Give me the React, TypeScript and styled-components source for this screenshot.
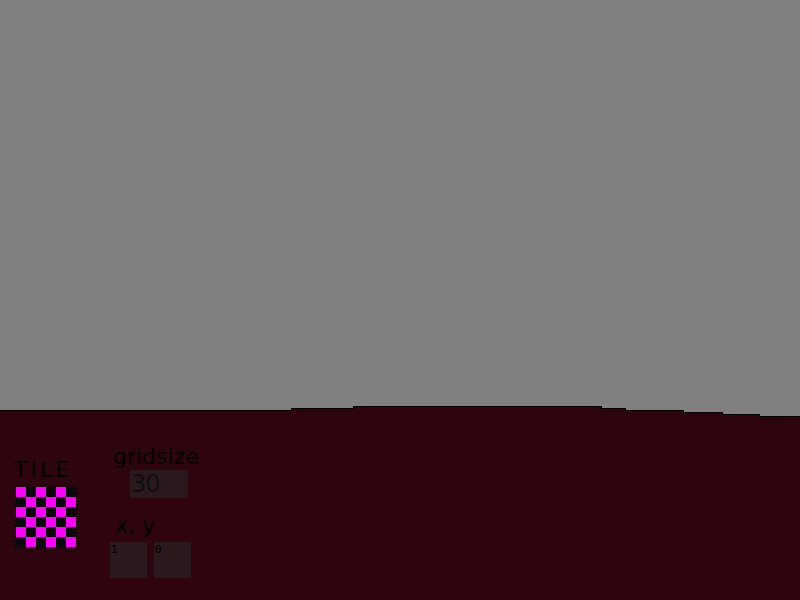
import React from 'react';
import styled, {createGlobalStyle} from 'styled-components';

const GlobalStyle = createGlobalStyle`
  html, body {
    margin: 0;
    padding: 0;
    background: #808080;
  }
  body {
    font-family: "DejaVu Sans", "Liberation Sans", sans-serif;
  }
`;

// terrain outline, left to right
const ridge: [number, number][] = [
  [0, 410], [291, 410], [291, 408], [353, 408], [353, 406], [601, 406],
  [601, 408], [625, 408], [625, 410], [683, 410], [683, 412], [722, 412],
  [722, 414], [759, 414], [759, 416], [800, 416],
];

const tileCells = Array.from({length: 36}, (_, i) => (Math.floor(i / 6) + (i % 6)) % 2 === 0);

const App: React.FC = () => {
  const ridgePts = ridge.map(([x, y]) => `${x},${y + 0.5}`).join(' ');
  return (
    <>
      <GlobalStyle />
      <Stage>
        <Terrain viewBox="0 0 800 600" width="800" height="600">
          <polygon points={`${ridgePts} 800,600 0,600`} fill="#2e050e" />
          <polyline points={ridgePts} fill="none" stroke="#000" strokeWidth="1" shapeRendering="crispEdges" />
        </Terrain>
        <Controls>
          <TileColumn>
            <Label $spaced>TILE</Label>
            <TileSwatch>
              {tileCells.map((pink, i) => (
                <Cell key={i} $pink={pink} />
              ))}
            </TileSwatch>
          </TileColumn>
          <SettingsColumn>
            <Label $indent={3}>gridsize</Label>
            <GridField>30</GridField>
            <Label $indent={5} $gap={16}>x, y</Label>
            <CoordRow>
              <CoordField>1</CoordField>
              <CoordField>0</CoordField>
            </CoordRow>
          </SettingsColumn>
        </Controls>
      </Stage>
    </>
  );
};

export default App;

const Stage = styled.div`
  position: relative;
  width: 800px;
  height: 600px;
  overflow: hidden;
  display: flex;
  flex-direction: column;
  justify-content: flex-end;
`;

const Terrain = styled.svg`
  position: absolute;
  left: 0;
  top: 0;
  display: block;
`;

const Controls = styled.div`
  position: relative;
  height: 160px;
  display: flex;
  padding-left: 14px;
  gap: 32px;
  box-sizing: border-box;
`;

const TileColumn = styled.div`
  display: flex;
  flex-direction: column;
  padding-top: 18px;
`;

const Label = styled.div<{$indent?: number; $gap?: number; $spaced?: boolean}>`
  font-size: 22px;
  line-height: 24px;
  color: #000;
  margin-left: ${p => p.$indent ?? 0}px;
  margin-top: ${p => p.$gap ?? 0}px;
  letter-spacing: ${p => (p.$spaced ? '3px' : '0')};
  white-space: nowrap;
`;

const TileSwatch = styled.div`
  margin-top: 3px;
  width: 60px;
  height: 60px;
  display: grid;
  grid-template-columns: repeat(6, 10px);
  grid-template-rows: repeat(6, 10px);
  border: 2px dotted #15020a;
`;

const Cell = styled.div<{$pink: boolean}>`
  background: ${p => (p.$pink ? '#ff00ff' : '#0a0a0a')};
`;

const SettingsColumn = styled.div`
  display: flex;
  flex-direction: column;
  padding-top: 5px;
`;

const GridField = styled.div`
  margin-top: 1px;
  margin-left: 20px;
  width: 58px;
  height: 28px;
  box-sizing: border-box;
  padding-left: 1px;
  background: #2a1a1e;
  color: #0e0e0e;
  font-size: 24px;
  line-height: 28px;
  letter-spacing: -1px;
`;

const CoordRow = styled.div`
  display: flex;
  gap: 7px;
  margin-top: 4px;
`;

const CoordField = styled.div`
  width: 37px;
  height: 36px;
  box-sizing: border-box;
  padding: 1px 1px 0;
  background: #2a1a1e;
  color: #000;
  font-family: "DejaVu Sans Mono", monospace;
  font-size: 11px;
  line-height: 13px;
`;
